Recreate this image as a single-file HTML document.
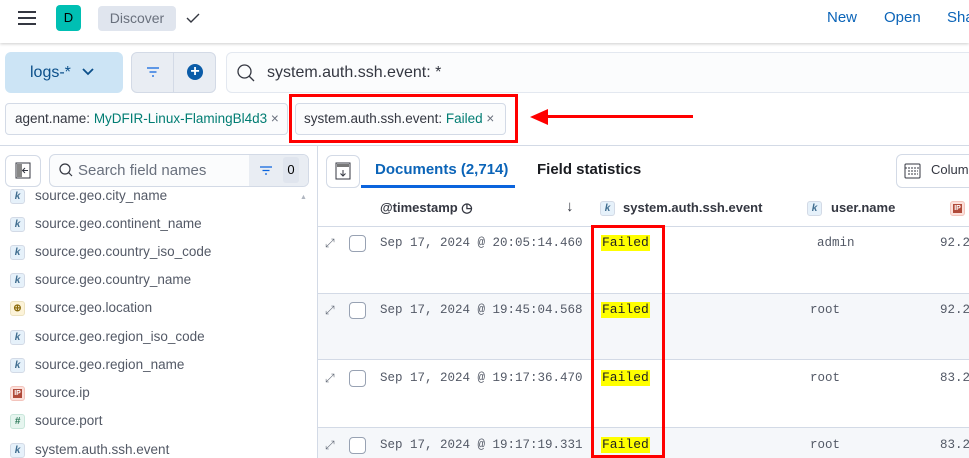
<!DOCTYPE html><html><head><style>
*{box-sizing:border-box;margin:0;padding:0}
body{width:969px;height:458px;overflow:hidden;position:relative;background:#fff;font-family:"Liberation Sans",sans-serif;color:#343741}
.a{position:absolute}
.k{position:absolute;width:15px;height:15px;border:1px solid #d3dae6;background:#e6f1fa;border-radius:3px;font-size:10px;font-weight:bold;font-style:italic;color:#3f6d8f;text-align:center;line-height:13px}
.fld{position:absolute;left:35px;font-size:13.5px;color:#535966}
.mono{font-family:"Liberation Mono",monospace;font-size:12.5px;color:#535966;position:absolute}
.hl{position:absolute;left:601px;background:#ff0;font-family:"Liberation Mono",monospace;font-size:13px;color:#222;padding:0 1px;height:16px;line-height:16px}
.cb{position:absolute;left:349px;width:17px;height:17px;border:1px solid #98a2b3;border-radius:4px;background:#fff}
.ex{position:absolute;left:325px;font-size:12px;color:#69707d}
</style></head><body>
<div class="a" style="left:0;top:0;width:969px;height:43px;background:#fff;box-shadow:0 1px 3px rgba(0,0,0,.2);z-index:2"></div>
<div class="a" style="z-index:3;left:18px;top:11px;width:18px;height:14px;border-top:2px solid #343741;border-bottom:2px solid #343741"></div>
<div class="a" style="z-index:3;left:18px;top:17px;width:18px;height:2px;background:#343741"></div>
<div class="a" style="z-index:3;left:56px;top:5px;width:25px;height:26px;background:#00bfb3;border-radius:4px;font-size:13px;text-align:center;line-height:26px;color:#000">D</div>
<div class="a" style="z-index:3;left:98px;top:6px;width:78px;height:25px;background:#e0e5ee;border-radius:4px;font-size:14px;color:#69707d;text-align:center;line-height:25px">Discover</div>
<svg class="a" style="z-index:3;left:185px;top:11px" width="16" height="14"><path d="M2 7l4 4 8-8" stroke="#343741" stroke-width="1.4" fill="none"/></svg>
<div class="a" style="z-index:3;left:827px;top:9px;font-size:15px;color:#0b64b8">New</div>
<div class="a" style="z-index:3;left:884px;top:9px;font-size:15px;color:#0b64b8">Open</div>
<div class="a" style="z-index:3;left:947px;top:9px;font-size:15px;color:#0b64b8">Share</div>
<div class="a" style="left:0;top:43px;width:969px;height:51px;background:#fff"></div>
<div class="a" style="left:5px;top:52px;width:118px;height:41px;background:#cce4f5;border-radius:6px;font-size:16px;color:#0b4f8a;line-height:41px;padding-left:25px">logs-* <svg width="14" height="10" style="margin-left:6px"><path d="M2 2l5 5 5-5" stroke="#0b4f8a" stroke-width="1.8" fill="none"/></svg></div>
<div class="a" style="left:131px;top:52px;width:85px;height:41px;background:#e9edf3;border:1px solid #d3dae6;border-radius:6px"></div>
<div class="a" style="left:173px;top:52px;width:1px;height:41px;background:#d3dae6"></div>
<svg class="a" style="left:146px;top:67px" width="14" height="10"><path d="M1 1h12M3.5 5h7M6 9h2" stroke="#0b64dd" stroke-width="1.3"/></svg>
<div class="a" style="left:187px;top:64px;width:16px;height:16px;border-radius:50%;background:#0b5ca8;color:#fff;font-size:16px;font-weight:bold;text-align:center;line-height:16px">+</div>
<div class="a" style="left:226px;top:52px;width:750px;height:41px;background:#fbfcfd;border:1px solid #e3e8f0;border-radius:6px"></div>
<svg class="a" style="left:236px;top:63px" width="20" height="20"><circle cx="8.5" cy="8.5" r="6.5" stroke="#343741" stroke-width="1.3" fill="none"/><path d="M13 13l5 5" stroke="#343741" stroke-width="1.3"/></svg>
<div class="a" style="left:267px;top:64px;font-size:16px;color:#343741">system.auth.ssh.event: *</div>
<div class="a" style="left:5px;top:103px;width:283px;height:32px;border:1px solid #d3dae6;border-radius:4px;background:#fbfcfd;font-size:13.5px;line-height:30px;padding-left:9px;color:#343741;white-space:nowrap">agent.name: <span style="color:#017d73">MyDFIR-Linux-FlamingBl4d3</span> <span style="color:#69707d">×</span></div>
<div class="a" style="left:295px;top:103px;width:211px;height:32px;border:1px solid #d3dae6;border-radius:4px;background:#fbfcfd;font-size:13.5px;line-height:30px;padding-left:8px;white-space:nowrap">system.auth.ssh.event: <span style="color:#017d73">Failed</span> <span style="color:#69707d">×</span></div>
<div class="a" style="left:289px;top:94px;width:229px;height:49px;border:3px solid #f00"></div>
<div class="a" style="left:545px;top:115px;width:148px;height:3px;background:#f00"></div>
<svg class="a" style="left:530px;top:108px" width="20" height="18"><path d="M0 9l18-8v16z" fill="#f00"/></svg>
<div class="a" style="left:0;top:145px;width:969px;height:1px;background:#d3dae6"></div>
<div class="a" style="left:317px;top:145px;width:1px;height:313px;background:#d3dae6"></div>
<div class="a" style="left:5px;top:155px;width:36px;height:32px;border:1px solid #d3dae6;border-radius:6px"></div>
<svg class="a" style="left:15px;top:162px" width="16" height="17"><rect x="1" y="1" width="14" height="15" fill="none" stroke="#343741"/><rect x="2" y="2" width="5" height="13" fill="#888"/><path d="M13 8.5H8M10 6l-2.5 2.5L10 11" stroke="#343741" fill="none"/></svg>
<div class="a" style="left:49px;top:154px;width:260px;height:33px;border:1px solid #d3dae6;border-radius:6px;background:#fbfcfd"></div>
<div class="a" style="left:249px;top:155px;width:59px;height:31px;background:#e9edf3;border-radius:0 5px 5px 0"></div>
<svg class="a" style="left:58px;top:162px" width="16" height="16"><circle cx="7" cy="7" r="5" stroke="#343741" stroke-width="1.2" fill="none"/><path d="M10.5 10.5l3.5 3.5" stroke="#343741" stroke-width="1.2"/></svg>
<div class="a" style="left:78px;top:162px;font-size:15px;color:#69707d">Search field names</div>
<svg class="a" style="left:260px;top:166px" width="12" height="9"><path d="M0 1h12M2.5 4.5h7M5 8h2" stroke="#0b64dd" stroke-width="1.2"/></svg>
<div class="a" style="left:283px;top:157px;width:16px;height:26px;background:#e0e5ee;border-radius:3px;font-size:13px;text-align:center;line-height:26px;color:#000">0</div>
<div class="a" style="left:300px;top:194px;font-size:7px;color:#b0b6c0">▲</div>
<div class="k" style="left:10px;top:189px">k</div><div class="fld" style="top:188px">source.geo.city_name</div>
<div class="k" style="left:10px;top:217px">k</div><div class="fld" style="top:216px">source.geo.continent_name</div>
<div class="k" style="left:10px;top:245px">k</div><div class="fld" style="top:244px">source.geo.country_iso_code</div>
<div class="k" style="left:10px;top:273px">k</div><div class="fld" style="top:272px">source.geo.country_name</div>
<div class="k" style="left:10px;top:301px;background:#fcf3d9;border-color:#ece2c0;color:#8a6a0a;font-style:normal">⊕</div><div class="fld" style="top:300px">source.geo.location</div>
<div class="k" style="left:10px;top:330px">k</div><div class="fld" style="top:329px">source.geo.region_iso_code</div>
<div class="k" style="left:10px;top:358px">k</div><div class="fld" style="top:357px">source.geo.region_name</div>
<div class="k" style="left:10px;top:386px;background:#fbe0db;border-color:#f3c4bc"><span style="display:block;margin:2px;background:#b04a3a;color:#fff;font-size:7px;line-height:9px;font-style:normal">IP</span></div><div class="fld" style="top:385px">source.ip</div>
<div class="k" style="left:10px;top:414px;background:#e6f5ef;border-color:#c8e6da;color:#2d7a5a">#</div><div class="fld" style="top:413px">source.port</div>
<div class="k" style="left:10px;top:443px">k</div><div class="fld" style="top:442px">system.auth.ssh.event</div>
<div class="a" style="left:326px;top:155px;width:34px;height:33px;border:1px solid #d3dae6;border-radius:6px"></div>
<svg class="a" style="left:335px;top:162px" width="16" height="18"><rect x="1" y="1" width="14" height="16" fill="none" stroke="#343741"/><rect x="2" y="2" width="12" height="3" fill="#777"/><path d="M8 8v6M5.5 11.5L8 14l2.5-2.5" stroke="#343741" fill="none"/></svg>
<div class="a" style="left:375px;top:161px;font-size:15px;font-weight:bold;color:#0b64b8">Documents (2,714)</div>
<div class="a" style="left:361px;top:185px;width:154px;height:3px;background:#0b64dd"></div>
<div class="a" style="left:537px;top:161px;font-size:15px;font-weight:bold;color:#1a1c21">Field statistics</div>
<div class="a" style="left:896px;top:154px;width:90px;height:34px;border:1px solid #d3dae6;border-radius:6px"></div>
<svg class="a" style="left:904px;top:163px" width="17" height="16"><rect x="1" y="1" width="15" height="14" rx="1" fill="none" stroke="#343741"/><path d="M1 5h15M4 8h10M4 11h10" stroke="#343741" stroke-dasharray="2 1"/></svg>
<div class="a" style="left:931px;top:162px;font-size:13px">Columns</div>
<div class="a" style="left:380px;top:200px;font-size:13px;font-weight:bold;color:#343741">@timestamp ◷</div>
<div class="a" style="left:566px;top:198px;font-size:15px;color:#343741">↓</div>
<div class="k" style="left:600px;top:201px">k</div>
<div class="a" style="left:623px;top:200px;font-size:13px;font-weight:bold">system.auth.ssh.event</div>
<div class="k" style="left:807px;top:201px">k</div>
<div class="a" style="left:831px;top:200px;font-size:13px;font-weight:bold">user.name</div>
<div class="k" style="left:950px;top:201px;background:#fbe0db;border-color:#f3c4bc"><span style="display:block;margin:2px;background:#b04a3a;color:#fff;font-size:7px;line-height:9px;font-style:normal">IP</span></div>
<div class="a" style="left:318px;top:226px;width:651px;height:1px;background:#d3dae6"></div>
<div class="a" style="left:318px;top:293px;width:651px;height:67px;background:#f5f7fa;border-top:1px solid #d3dae6;border-bottom:1px solid #d3dae6"></div>
<div class="a" style="left:318px;top:427px;width:651px;height:31px;background:#f5f7fa;border-top:1px solid #d3dae6"></div>
<div class="ex" style="top:236px">⤢</div><div class="cb" style="top:235px"></div><div class="mono" style="left:380px;top:236px">Sep 17, 2024 @ 20:05:14.460</div><div class="hl" style="top:235px">Failed</div><div class="mono" style="left:817px;top:236px">admin</div><div class="mono" style="left:940px;top:236px">92.2</div>
<div class="ex" style="top:303px">⤢</div><div class="cb" style="top:302px"></div><div class="mono" style="left:380px;top:303px">Sep 17, 2024 @ 19:45:04.568</div><div class="hl" style="top:302px">Failed</div><div class="mono" style="left:810px;top:303px">root</div><div class="mono" style="left:940px;top:303px">92.2</div>
<div class="ex" style="top:371px">⤢</div><div class="cb" style="top:370px"></div><div class="mono" style="left:380px;top:371px">Sep 17, 2024 @ 19:17:36.470</div><div class="hl" style="top:370px">Failed</div><div class="mono" style="left:810px;top:371px">root</div><div class="mono" style="left:940px;top:371px">83.2</div>
<div class="ex" style="top:438px">⤢</div><div class="cb" style="top:437px"></div><div class="mono" style="left:380px;top:438px">Sep 17, 2024 @ 19:17:19.331</div><div class="hl" style="top:437px">Failed</div><div class="mono" style="left:810px;top:438px">root</div><div class="mono" style="left:940px;top:438px">83.2</div>
<div class="a" style="left:591px;top:225px;width:74px;height:233px;border:3px solid #f00;border-bottom-width:3px"></div>
</body></html>
